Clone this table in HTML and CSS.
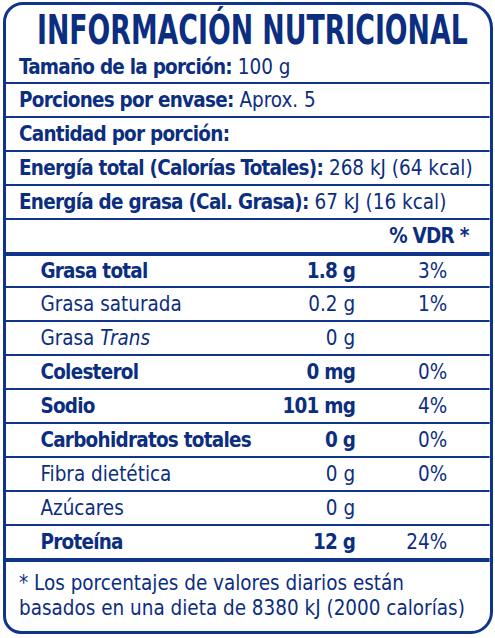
FILE: index.html
```html
<!DOCTYPE html>
<html lang="es">
<head>
    <meta charset="UTF-8">
    <meta name="viewport" content="width=device-width, initial-scale=1.0">
    <title>Información nutricional</title>
    <link rel="stylesheet" href="styles.css">
</head>
<body>
    <div class="label">
        <div class="sheet">
            <h1 class="title"><span>INFORMACIÓN NUTRICIONAL</span></h1>
            <div class="row info first"><b>Tamaño de la porción:</b>&nbsp;100 g</div>
            <div class="row info"><b>Porciones por envase:</b>&nbsp;Aprox. 5</div>
            <div class="row info"><b>Cantidad por porción:</b></div>
            <div class="row info"><b>Energía total (Calorías Totales):</b>&nbsp;268 kJ (64 kcal)</div>
            <div class="row info"><b>Energía de grasa (Cal. Grasa):</b>&nbsp;67 kJ (16 kcal)</div>
            <div class="row vdr-head thick"><b>% VDR *</b></div>

            <div class="row nutrient bold short">
                <span class="name">Grasa total</span><span class="amt">1.8 g</span><span class="pct">3%</span>
            </div>
            <div class="row nutrient">
                <span class="name">Grasa saturada</span><span class="amt">0.2 g</span><span class="pct">1%</span>
            </div>
            <div class="row nutrient">
                <span class="name">Grasa <em>Trans</em></span><span class="amt">0 g</span><span class="pct"></span>
            </div>
            <div class="row nutrient bold">
                <span class="name">Colesterol</span><span class="amt">0 mg</span><span class="pct">0%</span>
            </div>
            <div class="row nutrient bold">
                <span class="name">Sodio</span><span class="amt">101 mg</span><span class="pct">4%</span>
            </div>
            <div class="row nutrient bold">
                <span class="name">Carbohidratos totales</span><span class="amt">0 g</span><span class="pct">0%</span>
            </div>
            <div class="row nutrient">
                <span class="name">Fibra dietética</span><span class="amt">0 g</span><span class="pct">0%</span>
            </div>
            <div class="row nutrient">
                <span class="name">Azúcares</span><span class="amt">0 g</span><span class="pct"></span>
            </div>
            <div class="row nutrient bold thick">
                <span class="name">Proteína</span><span class="amt">12 g</span><span class="pct">24%</span>
            </div>

            <p class="note">* Los porcentajes de valores diarios están<br>basados en una dieta de 8380 kJ (2000 calorías)</p>
        </div>
    </div>
</body>
</html>
```

FILE: styles.css
```css
body {
    margin: 0;
    background-color: #ffffff;
    color: #0c2e80;
    font-family: "DejaVu Sans Condensed", "Liberation Sans Narrow", "Roboto Condensed", Roboto, sans-serif;
}
.label {
    box-sizing: border-box;
    width: 490px;
    height: 632px;
    margin: 2px 0 0 3px;
    border: 3px solid #0f3489;
    border-radius: 20px 26px 22px 18px;
    overflow: hidden;
}
/* the type is narrowed a little to get the condensed look of the printed label */
.sheet {
    width: 520.4px;
    transform: scaleX(0.93);
    transform-origin: 0 0;
}
.title {
    box-sizing: border-box;
    margin: 0;
    height: 47px;
    padding: 4px 0 0 9px;
    display: flex;
    justify-content: center;
    align-items: center;
    font-size: 41px;
    line-height: 1;
    font-weight: bold;
    white-space: nowrap;
}
.title span {
    display: inline-block;
    transform: scaleX(0.78);
}
.row {
    box-sizing: border-box;
    height: 34px;
    display: flex;
    align-items: center;
    border-bottom: 2px solid #0f3489;
    font-size: 22px;
    line-height: 1;
    white-space: nowrap;
}
.row.thick {
    border-bottom-width: 4px;
    height: 36px;
}
b, .bold .name, .bold .amt {
    font-weight: bold;
    letter-spacing: -0.8px;
}
.info {
    padding-left: 14px;
}
.info.first {
    height: 32px;
}
.vdr-head {
    justify-content: flex-end;
    padding-right: 23px;
}
.nutrient {
    display: grid;
    grid-template-columns: 1fr auto 99px;
    align-items: center;
    padding: 0 46px 0 37px;
}
.nutrient.short {
    height: 32px;
}
.amt, .pct {
    text-align: right;
}
.name em {
    font-style: italic;
}
.note {
    margin: 0;
    padding: 8px 14px 0;
    font-size: 22px;
    line-height: 25px;
    white-space: nowrap;
}
```
